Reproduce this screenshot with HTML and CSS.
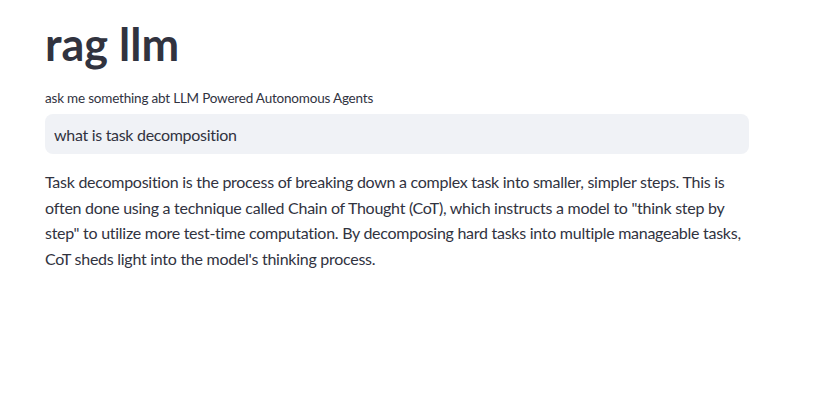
FILE: index.html
```html
<!DOCTYPE html>
<html lang="en">
<head>
<meta charset="utf-8">
<title>rag llm</title>
<link rel="stylesheet" href="styles.css">
</head>
<body>
<main class="main">
  <div class="block">
    <h1 class="title">rag llm</h1>
    <label class="label" for="q">ask me something abt LLM Powered Autonomous Agents</label>
    <div class="input-wrap">
      <input id="q" class="input" type="text" value="what is task decomposition">
    </div>
    <p class="answer">Task decomposition is the process of breaking down a complex task into smaller, simpler steps. This is often done using a technique called Chain of Thought (CoT), which instructs a model to "think step by step" to utilize more test-time computation. By decomposing hard tasks into multiple manageable tasks, CoT sheds light into the model's thinking process.</p>
  </div>
</main>
</body>
</html>
```

FILE: styles.css
```css
html, body {
  margin: 0;
  padding: 0;
  background: #ffffff;
}
body {
  font-family: Lato, "Noto Sans", sans-serif;
  color: rgb(49, 51, 63);
}
.main {
  padding: 0 0 0 45px;
}
.block {
  width: 704px;
  display: flex;
  flex-direction: column;
}
.title {
  margin: 0;
  padding-top: 17px;
  font-size: 45px;
  line-height: 1.2;
  font-weight: 700;
  letter-spacing: 0;
}
.label {
  margin-top: 17px;
  font-size: 13.5px;
  line-height: 20px;
  height: 20px;
  letter-spacing: -0.2px;
}
.input-wrap {
  margin-top: 6px;
  height: 40px;
  border-radius: 8px;
  background: rgb(240, 242, 246);
  display: flex;
  align-items: center;
}
.input {
  border: none;
  outline: none;
  background: transparent;
  font-family: inherit;
  font-size: 16px;
  letter-spacing: -0.3px;
  color: rgb(49, 51, 63);
  padding: 0 9px;
  width: 100%;
  height: 100%;
}
.answer {
  margin: 15px 0 0 0;
  font-size: 16px;
  line-height: 25.6px;
  letter-spacing: -0.27px;
}
```
